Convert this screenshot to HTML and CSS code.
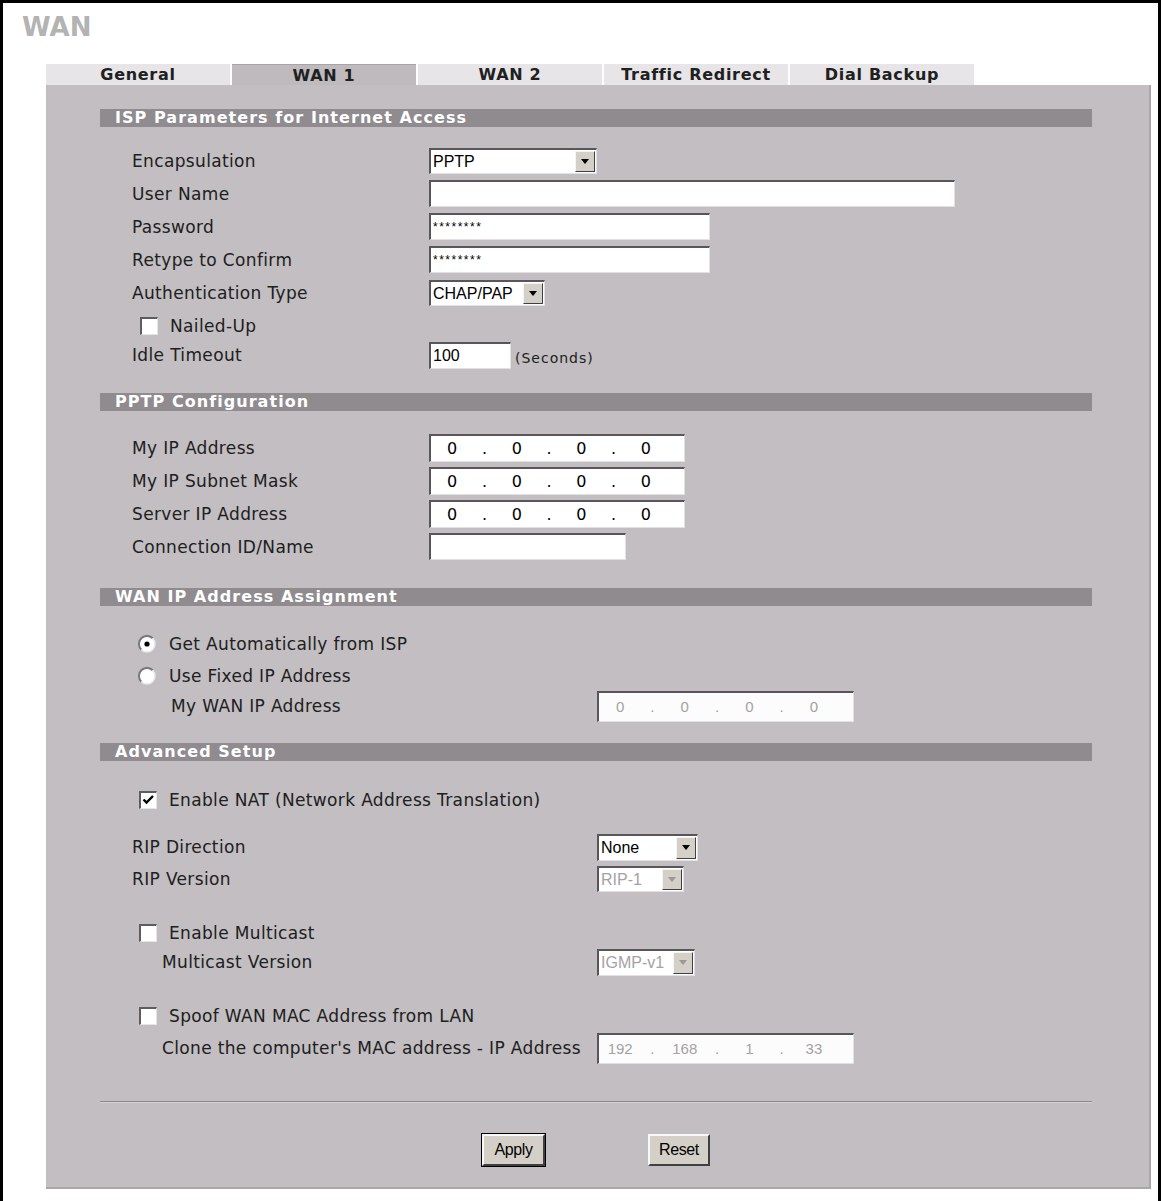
FILE: index.html
```html
<!DOCTYPE html>
<html>

<head>
    <title>WAN</title>
    <meta charset="utf-8">
    <link rel="stylesheet" href="styles.css">
</head>

<body>
    <div class="frame">
        <h1 class="title">WAN</h1>

        <nav class="tabs">
            <span class="tab">General</span>
            <span class="tab valgt">WAN 1</span>
            <span class="tab">WAN 2</span>
            <span class="tab">Traffic Redirect</span>
            <span class="tab">Dial Backup</span>
        </nav>

        <form class="panel">
            <!-- ISP -->
            <h2 class="section">ISP Parameters for Internet Access</h2>
            <div class="rows isp">
                <div class="row">
                    <span class="label">Encapsulation</span>
                    <div class="select encap"><span>PPTP</span><b class="arrow"></b></div>
                </div>
                <div class="row">
                    <span class="label">User Name</span>
                    <div class="input long"></div>
                </div>
                <div class="row">
                    <span class="label">Password</span>
                    <div class="input medium stars">********</div>
                </div>
                <div class="row">
                    <span class="label">Retype to Confirm</span>
                    <div class="input medium stars">********</div>
                </div>
                <div class="row">
                    <span class="label">Authentication Type</span>
                    <div class="select auth"><span>CHAP/PAP</span><b class="arrow"></b></div>
                </div>
                <div class="row">
                    <span class="check nailed"></span>
                    <span>Nailed-Up</span>
                </div>
                <div class="row last">
                    <span class="label">Idle Timeout</span>
                    <div class="input short">100</div>
                    <span class="unit">(Seconds)</span>
                </div>
            </div>

            <!-- PPTP -->
            <h2 class="section">PPTP Configuration</h2>
            <div class="rows pptp">
                <div class="row">
                    <span class="label">My IP Address</span>
                    <div class="input ip"><i>0</i><i>.</i><i>0</i><i>.</i><i>0</i><i>.</i><i>0</i></div>
                </div>
                <div class="row">
                    <span class="label">My IP Subnet Mask</span>
                    <div class="input ip"><i>0</i><i>.</i><i>0</i><i>.</i><i>0</i><i>.</i><i>0</i></div>
                </div>
                <div class="row">
                    <span class="label">Server IP Address</span>
                    <div class="input ip"><i>0</i><i>.</i><i>0</i><i>.</i><i>0</i><i>.</i><i>0</i></div>
                </div>
                <div class="row">
                    <span class="label">Connection ID/Name</span>
                    <div class="input conn"></div>
                </div>
            </div>

            <!-- WAN IP -->
            <h2 class="section">WAN IP Address Assignment</h2>
            <div class="rows wanip">
                <div class="row">
                    <svg class="radio" width="18" height="18" viewBox="0 0 18 18">
                        <circle cx="9" cy="9" r="8" fill="#fff" />
                        <path d="M3.3 14.7 A8 8 0 0 1 14.7 3.3" fill="none" stroke="#7a787a" stroke-width="2" />
                        <path d="M14.7 3.3 A8 8 0 0 1 3.3 14.7" fill="none" stroke="#e8e6e8" stroke-width="1.5" />
                        <circle cx="9" cy="9" r="2.6" fill="#000" />
                    </svg>
                    <span>Get Automatically from ISP</span>
                </div>
                <div class="row">
                    <svg class="radio" width="18" height="18" viewBox="0 0 18 18">
                        <circle cx="9" cy="9" r="8" fill="#fff" />
                        <path d="M3.3 14.7 A8 8 0 0 1 14.7 3.3" fill="none" stroke="#7a787a" stroke-width="2" />
                        <path d="M14.7 3.3 A8 8 0 0 1 3.3 14.7" fill="none" stroke="#e8e6e8" stroke-width="1.5" />
                    </svg>
                    <span>Use Fixed IP Address</span>
                </div>
                <div class="row sub">
                    <span class="label fixed-label">My WAN IP Address</span>
                    <div class="input ip off tall"><i>0</i><i>.</i><i>0</i><i>.</i><i>0</i><i>.</i><i>0</i></div>
                </div>
            </div>

            <!-- Avanceret -->
            <h2 class="section adv">Advanced Setup</h2>
            <div class="rows advanced">
                <div class="row">
                    <span class="check">
                        <svg width="15" height="15" viewBox="0 0 15 15">
                            <path d="M2.5 6.5 L5.5 9.5 L12 3" fill="none" stroke="#000" stroke-width="2.4" />
                        </svg>
                    </span>
                    <span>Enable NAT (Network Address Translation)</span>
                </div>
                <div class="row rip">
                    <span class="label wide">RIP Direction</span>
                    <div class="select rip-dir"><span>None</span><b class="arrow"></b></div>
                </div>
                <div class="row">
                    <span class="label wide">RIP Version</span>
                    <div class="select rip-ver off"><span>RIP-1</span><b class="arrow"></b></div>
                </div>
                <div class="row multicast">
                    <span class="check"></span>
                    <span>Enable Multicast</span>
                </div>
                <div class="row small">
                    <span class="label sub-label">Multicast Version</span>
                    <div class="select mc-ver off"><span>IGMP-v1</span><b class="arrow"></b></div>
                </div>
                <div class="row spoof">
                    <span class="check"></span>
                    <span>Spoof WAN MAC Address from LAN</span>
                </div>
                <div class="row">
                    <span class="label sub-label">Clone the computer's MAC address - IP Address</span>
                    <div class="input ip off tall mac"><i>192</i><i>.</i><i>168</i><i>.</i><i>1</i><i>.</i><i>33</i></div>
                </div>
            </div>

            <hr class="divider">

            <div class="buttons">
                <button type="button" class="button default">Apply</button>
                <button type="button" class="button">Reset</button>
            </div>
        </form>
    </div>
</body>

</html>
```

FILE: styles.css
```css
body {
    margin: 0;
    background-color: white;
    font-family: "DejaVu Sans", Verdana, sans-serif;
    color: #202020;
}

.frame {
    width: 1155px;
    height: 1198px;
    border: 3px solid black;
    border-bottom: none;
}

.title {
    margin: 0;
    padding: 9px 0 0 19px;
    font-size: 26px;
    line-height: 30px;
    color: #b3b3b3;
}

/* faner */

.tabs {
    display: flex;
    margin: 22px 0 0 43px;
}

.tab {
    width: 184px;
    height: 21px;
    margin-right: 2px;
    background-color: #e7e5e7;
    font-size: 16px;
    font-weight: bold;
    letter-spacing: 0.7px;
    line-height: 22px;
    text-align: center;
}

.valgt {
    background-color: #bebabe;
    border-top: 1px solid #a8a4a8;
    height: 20px;
}

/* panel */

.panel {
    box-sizing: border-box;
    width: 1105px;
    margin-left: 43px;
    padding: 24px 57px 21px 54px;
    background-color: #c2bec2;
    border-right: 2px solid #aaa6aa;
    border-bottom: 2px solid #aaa6aa;
}

.section {
    margin: 25px 0 0 0;
    height: 18px;
    padding-left: 15px;
    background-color: #8f8b8f;
    color: white;
    font-size: 16px;
    letter-spacing: 1.05px;
    line-height: 18px;
}

.section:first-child {
    margin-top: 0;
}

.section.adv {
    margin-top: 23px;
}

.rows {
    padding-left: 32px;
    font-size: 17px;
    letter-spacing: 0.35px;
}

.isp {
    padding-top: 17px;
}

.pptp {
    padding-top: 20px;
}

.wanip {
    padding-top: 22px;
}

.advanced {
    padding-top: 23px;
}

.row {
    display: flex;
    align-items: center;
    height: 33px;
}

.row.last {
    height: 26px;
}

.wanip .row {
    height: 32px;
}

.wanip .row.sub {
    height: 28px;
}

.advanced .row {
    height: 32px;
}

.advanced .row.small {
    height: 26px;
}

.advanced .row.rip {
    margin-top: 15px;
}

.advanced .row.multicast {
    margin-top: 22px;
}

.advanced .row.spoof {
    margin-top: 25px;
}

.label {
    flex-shrink: 0;
    width: 297px;
}

.label.wide {
    width: 465px;
}

.fixed-label {
    width: 426px;
    margin-left: 39px;
}

.sub-label {
    width: 435px;
    margin-left: 30px;
}

/* felter */

.input,
.select {
    box-sizing: border-box;
    height: 27px;
    background-color: white;
    border-top: 2px solid #585658;
    border-left: 2px solid #585658;
    border-right: 1px solid #e2e0e2;
    border-bottom: 1px solid #e2e0e2;
    font-family: "Liberation Sans", Arial, sans-serif;
    font-size: 16px;
    letter-spacing: 0;
    color: black;
}

.input {
    padding-left: 2px;
    line-height: 24px;
}

.long {
    width: 526px;
}

.medium {
    width: 281px;
}

.short {
    width: 82px;
}

.conn {
    width: 197px;
}

.stars {
    font-size: 12px;
    letter-spacing: 1.5px;
}

.unit {
    margin: 5px 0 0 4px;
    font-size: 14px;
    letter-spacing: 1px;
}

.ip {
    display: flex;
    width: 256px;
    height: 28px;
    padding-left: 5px;
    font-family: "DejaVu Sans", sans-serif;
    font-size: 16px;
    line-height: 25px;
}

.ip i {
    width: 32.3px;
    font-style: normal;
    text-align: center;
}

.ip.off {
    width: 257px;
    background-color: #fcfcfc;
    font-family: "Liberation Sans", Arial, sans-serif;
    font-size: 15px;
    color: #a4a2a4;
}

.ip.tall {
    height: 31px;
    line-height: 28px;
}

.select {
    display: flex;
    height: 26px;
}

.select span {
    flex: 1;
    padding-left: 2px;
    line-height: 23px;
}

.arrow {
    display: flex;
    align-items: center;
    justify-content: center;
    box-sizing: border-box;
    width: 20px;
    margin: 1px 1px 1px 0;
    background-color: #d4d0c8;
    border: 1px solid;
    border-color: #f4f4f4 #404040 #404040 #f4f4f4;
}

.arrow::after {
    content: "";
    border-left: 4px solid transparent;
    border-right: 4px solid transparent;
    border-top: 5px solid black;
}

.encap {
    width: 168px;
}

.auth {
    width: 116px;
}

.rip-dir {
    width: 101px;
    height: 27px;
}

.rip-ver {
    width: 87px;
}

.mc-ver {
    width: 98px;
    height: 27px;
}

.select.off {
    color: #a4a2a4;
}

.select.off .arrow::after {
    border-top-color: #9a989a;
}

/* afkrydsning */

.check {
    display: flex;
    align-items: center;
    justify-content: center;
    box-sizing: border-box;
    width: 18px;
    height: 18px;
    margin: 0 12px 0 7px;
    background-color: white;
    border-top: 2px solid #5e5c5e;
    border-left: 2px solid #5e5c5e;
    border-right: 1px solid #e6e4e6;
    border-bottom: 1px solid #e6e4e6;
}

.check.nailed {
    margin-left: 8px;
}

.radio {
    margin: 0 13px 0 6px;
}

/* knapper */

.divider {
    height: 0;
    margin: 37px 0 0 0;
    border: none;
    border-top: 1px solid #8a868a;
    border-bottom: 1px solid #d6d2d6;
}

.buttons {
    display: flex;
    justify-content: center;
    gap: 103px;
    margin-top: 31px;
}

.button {
    box-sizing: border-box;
    width: 62px;
    height: 32px;
    padding: 0;
    background-color: #d4d0c8;
    border: 2px solid;
    border-color: #f8f8f8 #404040 #404040 #f8f8f8;
    font-family: "Liberation Sans", Arial, sans-serif;
    font-size: 16px;
    letter-spacing: -0.4px;
    color: black;
}

.button.default {
    width: 63px;
    outline: 1px solid black;
}
```
